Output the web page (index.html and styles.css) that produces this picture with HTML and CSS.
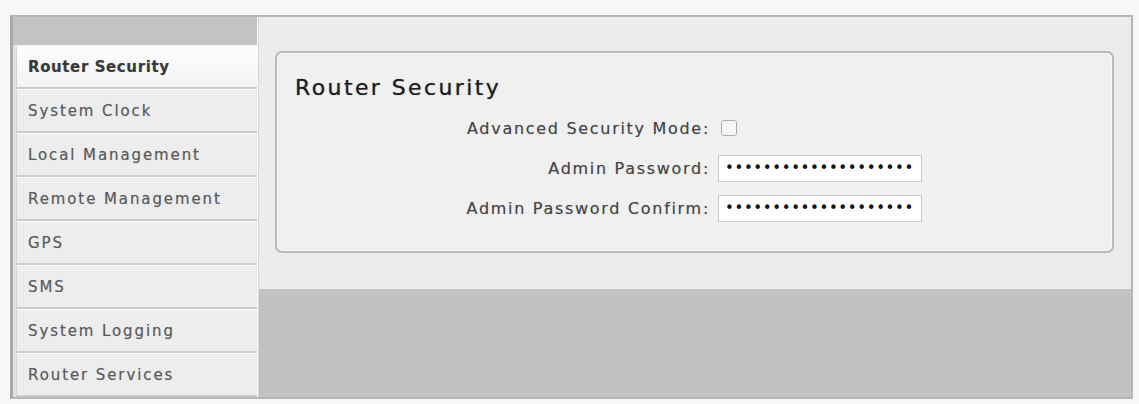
FILE: index.html
```html
<!DOCTYPE html>
<html lang="en">
<head>
<meta charset="utf-8">
<title>Router Security</title>
<link rel="stylesheet" href="styles.css">
</head>
<body>
<div class="page">
  <div class="frame">
    <aside class="sidebar">
      <div class="sidebar-head"></div>
      <nav class="nav">
        <a class="nav-item active">Router Security</a>
        <a class="nav-item">System Clock</a>
        <a class="nav-item">Local Management</a>
        <a class="nav-item">Remote Management</a>
        <a class="nav-item">GPS</a>
        <a class="nav-item">SMS</a>
        <a class="nav-item">System Logging</a>
        <a class="nav-item">Router Services</a>
      </nav>
    </aside>
    <main class="main">
      <div class="panel">
        <section class="box">
          <h2 class="box-title">Router Security</h2>
          <div class="form">
            <label class="label" for="adv">Advanced Security Mode:</label>
            <div class="control"><input class="check" id="adv" type="checkbox"></div>
            <label class="label" for="pw">Admin Password:</label>
            <div class="control"><input class="pass" id="pw" type="password" value="xxxxxxxxxxxxxxxxxxxx"></div>
            <label class="label" for="pw2">Admin Password Confirm:</label>
            <div class="control"><input class="pass" id="pw2" type="password" value="xxxxxxxxxxxxxxxxxxxx"></div>
          </div>
        </section>
      </div>
      <div class="footer-area"></div>
    </main>
  </div>
</div>
</body>
</html>
```

FILE: styles.css
```css
* { box-sizing: border-box; }

html, body {
  margin: 0;
  padding: 0;
  background: #f7f7f7;
  font-family: "DejaVu Sans", Verdana, sans-serif;
}

.page {
  width: 1139px;
  height: 404px;
  padding: 15px 6px 5px 10px;
}

.frame {
  display: flex;
  width: 1123px;
  height: 384px;
  border: 2px solid #b6b6b6;
  border-left: 3px solid #a9a9a9;
  background: #ececec;
}

.sidebar {
  width: 245px;
  flex: none;
  display: flex;
  flex-direction: column;
  background: #e2e2e2;
  border-right: 1px solid #fbfbfb;
}

.sidebar-head {
  height: 28px;
  background: #c3c3c3;
}

.nav {
  display: flex;
  flex-direction: column;
  flex: 1;
}

.nav-item {
  height: 44px;
  display: flex;
  align-items: center;
  padding-left: 11px;
  margin-left: 3px;
  border-top: 1px solid #fafafa;
  border-bottom: 2px solid #cbcbcb;
  border-left: 1px solid #d4d4d4;
  background: #ededed;
  color: #5a5a5a;
  font-size: 15px;
  letter-spacing: 1.9px;
  text-shadow: 0 0 1px rgba(0, 0, 0, 0.25);
  cursor: pointer;
}

.nav-item.active {
  background: linear-gradient(#fdfdfd, #f3f3f3);
  color: #3a3a3a;
  font-weight: bold;
  letter-spacing: 0.6px;
}

.main {
  flex: 1;
  display: flex;
  flex-direction: column;
  border-left: 1px solid #d6d6d6;
}

.panel {
  padding: 34px 17px 36px 16px;
  background: #ececec;
}

.footer-area {
  flex: 1;
  background: #c2c2c2;
}

.box {
  height: 202px;
  border: 2px solid #b9b9b9;
  border-radius: 7px;
  background: #f0f0f0;
  box-shadow: inset 0 0 0 1px #f9f9f9;
  padding: 22px 17px 0 18px;
}

.box-title {
  margin: 0;
  font-size: 22px;
  line-height: 26px;
  font-weight: normal;
  letter-spacing: 2.4px;
  color: #1e1e1e;
  text-shadow: 0 0 1px rgba(0, 0, 0, 0.55);
}

.form {
  display: grid;
  grid-template-columns: 415px auto;
  grid-auto-rows: 40px;
  column-gap: 8px;
  align-items: center;
  margin-top: 7px;
}

.label {
  text-align: right;
  font-size: 16px;
  letter-spacing: 1.7px;
  color: #444;
  text-shadow: 0 0 1px rgba(0, 0, 0, 0.25);
}

.control {
  display: flex;
  align-items: center;
}

.check {
  appearance: none;
  -webkit-appearance: none;
  width: 16px;
  height: 16px;
  margin: 0 0 0 3px;
  border: 1px solid #a9a9a9;
  border-radius: 3px;
  background: #f7f7f7;
}

.pass {
  width: 204px;
  height: 27px;
  margin: 0;
  padding: 0 0 0 6px;
  border: 1px solid #c9c9c9;
  background: #fff;
  font-family: "DejaVu Sans", sans-serif;
  font-size: 15px;
  letter-spacing: 0.6px;
  color: #111;
  outline: none;
}
```
